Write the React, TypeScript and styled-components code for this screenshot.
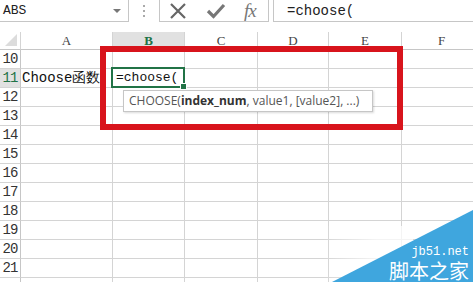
import React from "react";
import styled, { createGlobalStyle } from "styled-components";

const GlobalStyle = createGlobalStyle`
  html, body {
    margin: 0;
    padding: 0;
    background: #ffffff;
    overflow: hidden;
  }
  * {
    box-sizing: border-box;
  }
`;

const Page = styled.div`
  position: relative;
  width: 473px;
  height: 282px;
  overflow: hidden;
  background: #fff;
  font-family: "Liberation Mono", "DejaVu Sans Mono", monospace;
`;

const Toolbar = styled.div`
  display: flex;
  align-items: flex-start;
  height: 32px;
`;

const NameBox = styled.div`
  position: relative;
  width: 129px;
  height: 22px;
  border-right: 1px solid #c6c6c6;
  border-bottom: 1px solid #c6c6c6;
  padding-left: 3px;
  font-size: 13px;
  line-height: 22px;
  color: #222;
`;

const DropArrow = styled.span`
  position: absolute;
  right: 7px;
  top: 9px;
  width: 0;
  height: 0;
  border-left: 4px solid transparent;
  border-right: 4px solid transparent;
  border-top: 4px solid #777;
`;

const Dots = styled.div`
  width: 30px;
  display: flex;
  flex-direction: column;
  align-items: center;
  gap: 3px;
  padding-top: 5px;
  span {
    width: 2px;
    height: 2px;
    background: #aaa;
  }
`;

const ButtonBox = styled.div`
  display: flex;
  align-items: center;
  width: 110px;
  height: 22px;
  border-left: 1px solid #c6c6c6;
  border-right: 1px solid #c6c6c6;
  border-bottom: 1px solid #c6c6c6;
  padding-left: 8px;
  gap: 18px;
`;

const Fx = styled.span`
  font-family: "Liberation Serif", serif;
  font-style: italic;
  font-size: 19px;
  color: #777;
  line-height: 22px;
  letter-spacing: -1px;
`;

const FormulaInput = styled.div`
  flex: 1;
  margin-left: 4px;
  height: 22px;
  border-left: 1px solid #c6c6c6;
  border-bottom: 1px solid #c6c6c6;
  padding-left: 13px;
  font-size: 14px;
  line-height: 22px;
  color: #222;
`;

const Sheet = styled.div`
  display: grid;
  grid-template-columns: 21px 92px 72px 73px 71px 73px 80px;
  grid-template-rows: 18px repeat(13, 19px);
`;

const Corner = styled.div`
  position: relative;
  border-right: 1px solid #d4d4d4;
  border-bottom: 1px solid #c6c6c6;
  &::after {
    content: "";
    position: absolute;
    right: 3px;
    bottom: 3px;
    width: 0;
    height: 0;
    border-left: 12px solid transparent;
    border-bottom: 12px solid #dcdcdc;
  }
`;

const ColHead = styled.div<{ $active?: boolean }>`
  border-right: 1px solid #d4d4d4;
  border-bottom: 1px solid #c6c6c6;
  background: ${(p) => (p.$active ? "#e1e1e1" : "#fff")};
  color: ${(p) => (p.$active ? "#217346" : "#444")};
  font-family: "Liberation Serif", serif;
  font-weight: ${(p) => (p.$active ? 700 : 400)};
  font-size: 13px;
  line-height: 18px;
  text-align: center;
`;

const RowHead = styled.div<{ $active?: boolean }>`
  border-right: 1px solid #c6c6c6;
  border-bottom: 1px solid #d4d4d4;
  background: ${(p) => (p.$active ? "#e1e1e1" : "#fff")};
  color: ${(p) => (p.$active ? "#217346" : "#333")};
  font-size: 14px;
  line-height: 18px;
  text-align: center;
  letter-spacing: -1px;
  overflow: hidden;
  white-space: nowrap;
`;

const Cell = styled.div`
  position: relative;
  border-right: 1px solid #d4d4d4;
  border-bottom: 1px solid #d4d4d4;
  font-size: 14px;
  line-height: 18px;
  color: #111;
  white-space: nowrap;
  padding-left: 1px;
`;

const ActiveCell = styled(Cell)`
  &::before {
    content: "";
    position: absolute;
    left: -2px;
    top: -2px;
    right: -1px;
    bottom: -1px;
    border: 2px solid #217346;
  }
  &::after {
    content: "";
    position: absolute;
    right: -3px;
    bottom: -3px;
    width: 5px;
    height: 5px;
    background: #217346;
    border: 1px solid #fff;
  }
  font-size: 13px;
  padding-left: 3px;
  z-index: 1;
`;

const Highlight = styled.div`
  position: absolute;
  left: 100px;
  top: 46px;
  width: 303px;
  height: 84px;
  border: 6px solid #d8141c;
  z-index: 2;
`;

const Tip = styled.div`
  position: absolute;
  left: 123px;
  top: 90px;
  width: 250px;
  height: 22px;
  background: #fff;
  border: 1px solid #c6c6c6;
  box-shadow: 1px 1px 2px rgba(0, 0, 0, 0.15);
  padding-left: 5px;
  font-family: "Open Sans", "Liberation Sans", sans-serif;
  font-size: 12px;
  line-height: 20px;
  color: #555;
  white-space: nowrap;
  z-index: 3;
  b {
    color: #333;
    font-weight: 700;
  }
`;

const Watermark = styled.div`
  position: absolute;
  right: 0;
  bottom: 0;
  width: 141px;
  height: 72px;
  z-index: 4;
`;

const Fade = styled.div`
  position: absolute;
  right: 60px;
  bottom: 0;
  width: 90px;
  height: 56px;
  background: linear-gradient(90deg, rgba(255, 255, 255, 0) 0%, rgba(255, 255, 255, 0.75) 60%);
  z-index: 3;
`;

const MarkText = styled.div`
  position: absolute;
  right: 4px;
  bottom: 1px;
  display: flex;
  flex-direction: column;
  align-items: flex-end;
  gap: 2px;
  color: #fff;
`;

const MarkSite = styled.div`
  font-family: "Liberation Mono", monospace;
  font-size: 12px;
  line-height: 12px;
`;

const MarkName = styled.div`
  font-family: "Noto Sans CJK SC", sans-serif;
  font-size: 20px;
  line-height: 21px;
`;

const columns = ["A", "B", "C", "D", "E", "F"];
const rows = [10, 11, 12, 13, 14, 15, 16, 17, 18, 19, 20, 21, 22];

export default function App() {
  return (
    <Page>
      <GlobalStyle />
      <Toolbar>
        <NameBox>
          ABS
          <DropArrow />
        </NameBox>
        <Dots>
          <span />
          <span />
          <span />
        </Dots>
        <ButtonBox>
          <svg width="20" height="20" viewBox="0 0 20 20">
            <path d="M3 3 L17 17 M17 3 L3 17" stroke="#666" strokeWidth="2.2" fill="none" />
          </svg>
          <svg width="20" height="20" viewBox="0 0 20 20">
            <path d="M2 10 L7.5 15.5 L18 4" stroke="#777" strokeWidth="3.2" fill="none" />
          </svg>
          <Fx>fx</Fx>
        </ButtonBox>
        <FormulaInput>=choose(</FormulaInput>
      </Toolbar>
      <Sheet>
        <Corner />
        {columns.map((c) => (
          <ColHead key={c} $active={c === "B"}>
            {c}
          </ColHead>
        ))}
        {rows.map((r) => (
          <React.Fragment key={r}>
            <RowHead $active={r === 11}>{r < 22 ? r : ""}</RowHead>
            {columns.map((c) => {
              if (r === 11 && c === "A") return <Cell key={c}>Choose函数</Cell>;
              if (r === 11 && c === "B") return <ActiveCell key={c}>=choose(</ActiveCell>;
              return <Cell key={c} />;
            })}
          </React.Fragment>
        ))}
      </Sheet>
      <Highlight />
      <Tip>
        CHOOSE(<b>index_num</b>, value1, [value2], ...)
      </Tip>
      <Fade />
      <Watermark>
        <svg width="141" height="72" viewBox="0 0 141 72">
          <polygon points="0,72 141,0 141,72" fill="#3fa6de" />
        </svg>
        <MarkText>
          <MarkSite>jb51.net</MarkSite>
          <MarkName>脚本之家</MarkName>
        </MarkText>
      </Watermark>
    </Page>
  );
}
